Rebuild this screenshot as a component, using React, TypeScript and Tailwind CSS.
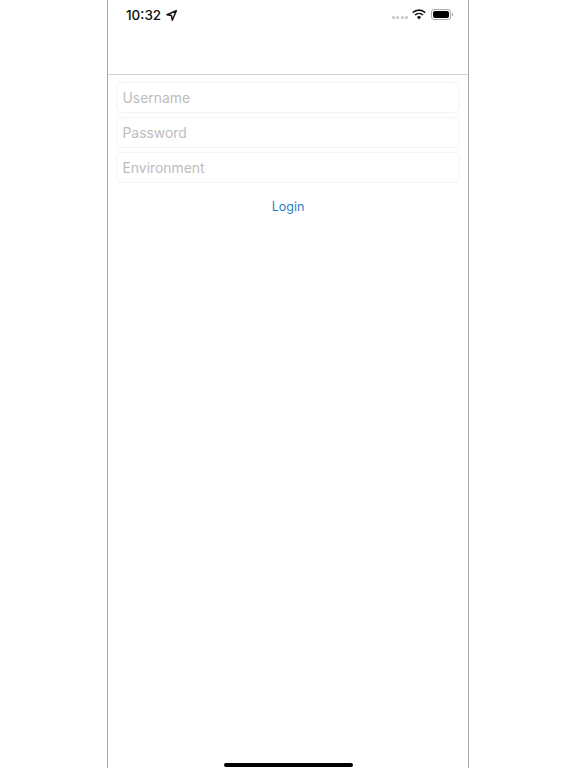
function Field({ label }: { label: string }) {
  return (
    <div className="h-[31px] rounded-[6px] border border-[#f4f4f4] flex items-center pl-[5.5px] pt-[1px] text-[13.9px] text-[#bdbdbd]">
      {label}
    </div>
  );
}

export default function App() {
  return (
    <div className="h-[768px] w-[576px] bg-white overflow-hidden font-['Inter',sans-serif]">
      <div className="relative ml-[107px] h-full w-[362px] border-x border-[#a8a8a8] flex flex-col">
        {/* Status bar */}
        <div className="h-[74px] border-b border-[#d4d4d4] box-content flex items-start justify-between">
          <div className="flex items-center gap-[5px] pl-[18px] pt-[7px]">
            <span className="text-[13.5px] leading-[17px] font-medium text-[#111]">10:32</span>
            <svg width="11" height="11" viewBox="0 0 11 11">
              <path d="M10.4.6 1 4.7l4.4.9.9 4.6z" fill="none" stroke="#111" strokeWidth="1.5" strokeLinejoin="round" />
            </svg>
          </div>
          <div className="flex items-center pr-[15px] pt-[9px]">
            <div className="flex gap-[1.5px] mr-[4px] mt-[6px]">
              <span className="w-[3px] h-[3px] rounded-full bg-[#c4c4c4]" />
              <span className="w-[3px] h-[3px] rounded-full bg-[#c4c4c4]" />
              <span className="w-[3px] h-[3px] rounded-full bg-[#c4c4c4]" />
              <span className="w-[3px] h-[3px] rounded-full bg-[#c4c4c4]" />
            </div>
            <svg width="14" height="11" viewBox="0 0 14 11" className="mr-[5px]">
              <path d="M.8 3.6a9 9 0 0 1 12.4 0" fill="none" stroke="#111" strokeWidth="1.6" />
              <path d="M3 6a6 6 0 0 1 8 0" fill="none" stroke="#111" strokeWidth="1.6" />
              <path d="M4.9 8a3.2 3.2 0 0 1 4.2 0L7 10.4z" fill="#111" />
            </svg>
            <div className="w-[20px] h-[11px] rounded-[3px] border border-[#a9a9a9] p-[1px]">
              <div className="w-full h-full rounded-[2px] bg-black" />
            </div>
            <div className="w-[1px] h-[3px] bg-[#a9a9a9] ml-[1px]" />
          </div>
        </div>

        {/* Login form */}
        <div className="flex flex-col gap-[4px] px-[8px] pt-[7px]">
          <Field label="Username" />
          <Field label="Password" />
          <Field label="Environment" />
        </div>
        <div className="mt-[14px] text-center text-[12.5px] leading-[20px] text-[#2c80c4]">Login</div>

        {/* Home indicator */}
        <div className="absolute bottom-[1px] left-[116px] w-[129px] h-[4px] rounded-full bg-black" />
      </div>
    </div>
  );
}
